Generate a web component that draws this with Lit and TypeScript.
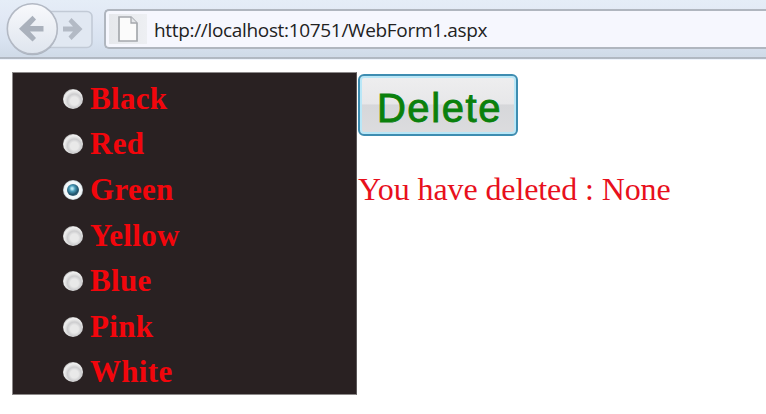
import { LitElement, html, css } from "lit";
import { customElement, property, state } from "lit/decorators.js";
import { classMap } from "lit/directives/class-map.js";

@customElement("browser-bar")
class BrowserBar extends LitElement {
  @property() url = "";

  static styles = css`
    :host {
      display: flex;
      box-sizing: border-box;
      height: 60px;
      background: linear-gradient(#e5edf7 0, #e2e9f5 16px, #d8e2f0 42px, #d0dbe8 56px, #d3dbea 57px, #afb6c0 57px, #b4bbc5 59px, #eef3fc 59px);
    }
    .nav { width: 104px; height: 58px; flex: none; }
    .address {
      display: flex;
      align-items: center;
      box-sizing: border-box;
      flex: 1;
      height: 40px;
      margin-top: 9px;
      border: 2px solid #b0b6bf;
      border-right: 0;
      border-radius: 5px 0 0 5px;
      background: #f6f7fe;
      padding-left: 3px;
      overflow: hidden;
    }
    .site {
      display: flex;
      align-items: center;
      justify-content: center;
      width: 38px;
      height: 30px;
      background: linear-gradient(90deg, #e6e8ec, #edeff3);
      flex: none;
    }
    .url {
      margin-left: 7px;
      padding-top: 2px;
      font: 19px/30px "Open Sans", sans-serif;
      letter-spacing: -0.33px;
      color: #222;
      white-space: nowrap;
    }
  `;

  render() {
    return html`
      <svg class="nav" viewBox="0 0 104 58">
        <defs>
          <linearGradient id="face" x2="0" y2="1">
            <stop offset="0" stop-color="#f8f9fc" />
            <stop offset="1" stop-color="#dfe5ee" />
          </linearGradient>
        </defs>
        <rect x="32" y="11.5" width="60" height="36" rx="5" fill="#e1e8f2" stroke="#c2cad6" stroke-width="1.6" />
        <circle cx="32.5" cy="30.3" r="25" fill="#8d949e" opacity=".55" />
        <circle cx="32.3" cy="28.8" r="25" fill="url(#face)" stroke="#b3b9c4" stroke-width="1.6" />
        <path d="M19 28.7 32.5 15.7 36 19.5 30 26H43.5V31.5H30L36 38 32.5 41.5Z" fill="#aab1bc" />
        <path d="M82.5 29 71.5 18 68.5 21.5 73 26.5H63V31.5H73L68.5 36.5 71.5 40Z" fill="#b3bac5" />
      </svg>
      <div class="address">
        <span class="site">
          <svg width="20" height="26" viewBox="0 0 20 26">
            <path d="M1 1H13L19 7V25H1Z" fill="#fbfbfb" stroke="#a5a8ad" stroke-width="1.7" />
            <path d="M13 1V7H19" fill="#e4e6e9" stroke="#a5a8ad" stroke-width="1.3" />
          </svg>
        </span>
        <span class="url">${this.url}</span>
      </div>
    `;
  }
}

@customElement("colour-option")
class ColourOption extends LitElement {
  @property() label = "";
  @property({ type: Boolean }) checked = false;

  static styles = css`
    :host {
      display: flex;
      align-items: center;
      height: 45.6px;
      cursor: default;
    }
    .dot {
      display: flex;
      align-items: center;
      justify-content: center;
      width: 20px;
      height: 20px;
      border-radius: 50%;
      background: radial-gradient(circle at 57% 60%, #e9e9e9 0 24%, #cdcdcf 42%, #e0e0e0 52%, #f0f0f0 64%, #c4c4c4 72%);
    }
    .on { background: radial-gradient(circle, #f3f8fa 0 60%, #b8c6cc 70%); }
    .on::after {
      content: "";
      width: 12px;
      height: 12px;
      border-radius: 50%;
      background: radial-gradient(circle at 43% 38%, #bdebf5 0 8%, #4a9dbb 28%, #1e526a 60%, #456f83 75%);
    }
    .label {
      margin-left: 7px;
      font: bold 31px/36px "Liberation Serif", serif;
      letter-spacing: 0.3px;
      color: #f2060c;
    }
  `;

  render() {
    return html`<span class=${classMap({ dot: true, on: this.checked })}></span><span class="label">${this.label}</span>`;
  }
}

@customElement("app-root")
class AppRoot extends LitElement {
  @state() private selected = "Green";
  @state() private deleted = "None";
  @state() private colours = ["Black", "Red", "Green", "Yellow", "Blue", "Pink", "White"];

  static styles = css`
    :host { display: block; height: 414px; background: #fff; overflow: hidden; }
    .page { display: flex; padding: 12px 0 0 12px; }
    .list {
      box-sizing: border-box;
      width: 345px;
      height: 323px;
      border: 1px solid #8c8989;
      border-right-color: #5b5758;
      background: #292122;
      padding: 3px 0 0 50px;
    }
    .side { display: flex; flex-direction: column; align-items: flex-start; padding: 2px 0 0 1px; }
    .delete {
      box-sizing: border-box;
      width: 160px;
      height: 62px;
      border: 2px solid #3e8db1;
      border-radius: 6px;
      padding: 6px 0 0 3px;
      background: linear-gradient(#eeeeef 0, #e7e7e9 48%, #d6d7da 50%, #dcdcde 100%);
      box-shadow: inset 0 0 0 2px #b9e7f7;
      font: 40px/50px "Liberation Sans", sans-serif;
      letter-spacing: 1.6px;
      color: #0a800c;
      -webkit-text-stroke: 0.9px #0a800c;
    }
    .message {
      margin-top: 35px;
      font: 32px/36px "Liberation Serif", serif;
      letter-spacing: -0.1px;
      color: #e8101c;
      white-space: nowrap;
    }
  `;

  private remove() {
    this.deleted = this.selected;
    this.colours = this.colours.filter((c) => c !== this.selected);
  }

  render() {
    return html`
      <browser-bar url="http://localhost:10751/WebForm1.aspx"></browser-bar>
      <main class="page">
        <div class="list">
          ${this.colours.map(
            (c) => html`<colour-option .label=${c} .checked=${c === this.selected} @click=${() => (this.selected = c)}></colour-option>`
          )}
        </div>
        <div class="side">
          <button class="delete" @click=${this.remove}>Delete</button>
          <div class="message">You have deleted : ${this.deleted}</div>
        </div>
      </main>
    `;
  }
}
